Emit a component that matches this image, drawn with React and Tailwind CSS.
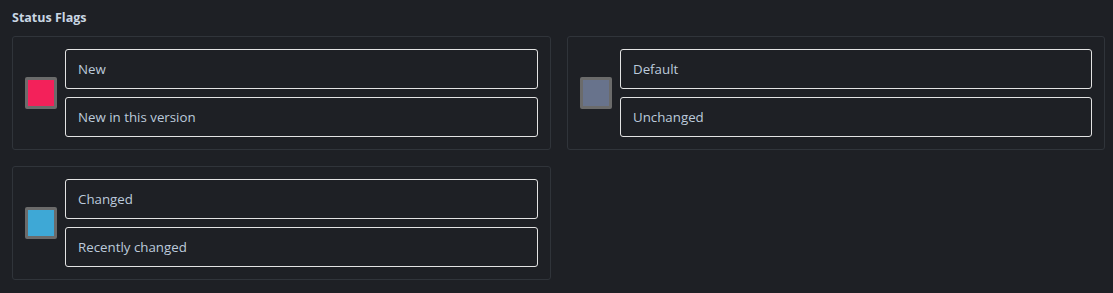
const flags = [
  { id: 'new', label: 'New', description: 'New in this version', color: 'bg-[#f3215a]' },
  { id: 'default', label: 'Default', description: 'Unchanged', color: 'bg-[#68738c]' },
  { id: 'changed', label: 'Changed', description: 'Recently changed', color: 'bg-[#3ea8d6]' },
]

const FlagCard = ({ flag }) => (
  <div className="flex items-center gap-2 rounded-[3px] border border-[#30343a] p-3">
    <div className={`h-8 w-8 shrink-0 rounded-[2px] border-[3px] border-[#6b6b6b] ${flag.color}`}></div>
    <div className="flex flex-1 flex-col gap-2">
      <div className="flex h-10 items-center rounded-[3px] border border-[#e3e3e3] px-3 pt-px text-[13.3px] text-[#bccadb]">
        {flag.label}
      </div>
      <div className="flex h-10 items-center rounded-[3px] border border-[#e3e3e3] px-3 pt-px text-[13.3px] text-[#bccadb]">
        {flag.description}
      </div>
    </div>
  </div>
)

export default function App() {
  return (
    <div
      className="h-[293px] w-[1113px] bg-[#1e2025] px-3 pt-[9px]"
      style={{ fontFamily: '"Open Sans", "Noto Sans", sans-serif' }}
    >
      <h2 className="text-[12.5px] font-bold leading-[18px] text-[#c9d6e3]">Status Flags</h2>
      <div className="mt-[9px] grid grid-cols-[539px_538px] gap-x-[16px] gap-y-[16px]">
        {flags.map((flag) => (
          <FlagCard key={flag.id} flag={flag} />
        ))}
      </div>
    </div>
  )
}
